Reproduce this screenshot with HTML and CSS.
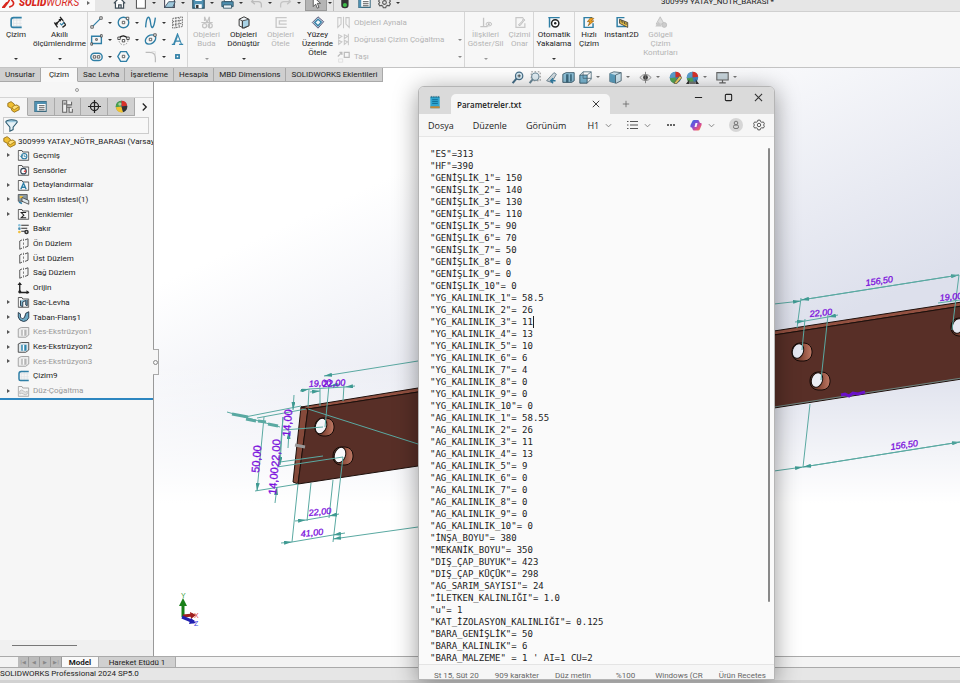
FILE: index.html
```html
<!DOCTYPE html>
<html lang="tr">
<head>
<meta charset="utf-8">
<title>SOLIDWORKS - Parametreler</title>
<link rel="stylesheet" href="styles.css">
</head>
<body>
<svg class="defs" aria-hidden="true">
  <defs>
    <linearGradient id="cyl" x1="0" x2="1"><stop offset="0" stop-color="#4d2a20"/><stop offset=".5" stop-color="#8a4b3a"/><stop offset="1" stop-color="#c07a66"/></linearGradient>
    <linearGradient id="copilotGrad" x1="0" y1="0" x2="1" y2="1"><stop offset="0" stop-color="#2b6fe0"/><stop offset=".4" stop-color="#7a4fd8"/><stop offset=".7" stop-color="#e0508a"/><stop offset="1" stop-color="#f09030"/></linearGradient>
    <marker id="arrow" viewBox="0 0 8 4" markerWidth="8" markerHeight="4" refX="8" refY="2" orient="auto-start-reverse" markerUnits="userSpaceOnUse"><path d="M0 0L8 2L0 4z" style="fill:#3f9a92;stroke:none"/></marker>
  </defs>
  <symbol id="i-sketch" viewBox="0 0 16 16"><path d="M5 1v14M9 1v14M13 4v10M4 5h11M4 9h11M4 12h11" stroke="#dfe3e6" fill="none"/><path d="M15 2H5Q2 2 2 5v7q0 2 2 2h11" fill="none" stroke="#2f7fa6" stroke-width="2"/></symbol>
  <symbol id="i-dim" viewBox="0 0 16 16"><path d="M2 11L10 3M1 8l4 6M8 1l4 5M12 7l3 4M11 14l4-3" stroke="#222" stroke-width="1.6" fill="none"/><path d="M2 11l1-4 3 3zM10 3L6 4l3 3z" fill="#222"/><path d="M8 9l2 2 3-3" stroke="#2f7fa6" fill="none" stroke-width="1.5"/></symbol>
  <symbol id="i-line" viewBox="0 0 16 16"><path d="M2 14L14 2" stroke="#2f7fa6" stroke-width="1.6"/><path d="M1 12h3v3H1zM12 1h3v3h-3z" fill="#fff" stroke="#444"/></symbol>
  <symbol id="i-circle" viewBox="0 0 16 16"><circle cx="8" cy="8" r="6.5" fill="none" stroke="#2f7fa6" stroke-width="1.7"/><path d="M6.500 6.500h3v3h-3zM11.500 1.500h3v3h-3z" fill="#fff" stroke="#444"/></symbol>
  <symbol id="i-spline" viewBox="0 0 16 16"><path d="M2 14C3-2 7-1 8 8s4 9 6-6" fill="none" stroke="#2f7fa6" stroke-width="1.7"/></symbol>
  <symbol id="i-mesh" viewBox="0 0 16 16"><path d="M2 3L14 1v12L2 15zM6 2v13M10 2v12M2 7l12-2M2 11l12-2" fill="none" stroke="#555" stroke-dasharray="2 1"/></symbol>
  <symbol id="i-rect" viewBox="0 0 16 16"><path d="M2 4h12v9H2z" fill="none" stroke="#2f7fa6" stroke-width="1.7"/><path d="M7 7h2v2H7zM13 2h2v3h-2zM1 12h2v3H1z" fill="#fff" stroke="#444"/></symbol>
  <symbol id="i-arc" viewBox="0 0 16 16"><circle cx="8" cy="9" r="5.500" fill="none" stroke="#888" stroke-dasharray="2 1.500"/><path d="M2 7q5-7 12 0" stroke="#222" stroke-width="1.600" fill="none"/><path d="M1 5h3v3H1zM12 5h3v3h-3zM6.500 8h3v3h-3z" fill="#fff" stroke="#333"/></symbol>
  <symbol id="i-ellipse" viewBox="0 0 16 16"><ellipse cx="8" cy="8" rx="7" ry="5" transform="rotate(-35 8 8)" fill="none" stroke="#2f7fa6" stroke-width="1.700"/><path d="M6.500 6.500h3v3h-3zM12 1h3v3h-3z" fill="#fff" stroke="#444"/></symbol>
  <symbol id="i-text" viewBox="0 0 16 16"><path d="M1 14h4M10 14h5M3 14L8 1l5 13M8 4L4 14M5 10h6" fill="none" stroke="#3787ad" stroke-width="1.300"/></symbol>
  <symbol id="i-slot" viewBox="0 0 16 16"><rect x="1" y="4" width="14" height="9" rx="4.500" fill="none" stroke="#2f7fa6" stroke-width="1.700"/><path d="M4 7h3v3H4zM9 7h3v3H9z" fill="#fff" stroke="#444"/></symbol>
  <symbol id="i-poly" viewBox="0 0 16 16"><path d="M4.500 2h7L15 8l-3.500 6h-7L1 8z" fill="none" stroke="#2f7fa6" stroke-width="1.700"/><path d="M6.500 6.500h3v3h-3z" fill="#fff" stroke="#444"/></symbol>
  <symbol id="i-fillet" viewBox="0 0 16 16"><path d="M2 3h5q7 0 7 7v5" fill="none" stroke="#bbb" stroke-width="1.500"/><path d="M9 2h5v5" fill="none" stroke="#ddd"/></symbol>
  <symbol id="i-point" viewBox="0 0 16 16"><path d="M5 5h6v6H5z" fill="#2f7fa6"/><path d="M7 7h2v2H7z" fill="#fff"/></symbol>
  <symbol id="i-trim" viewBox="0 0 16 16"><path d="M1 8h14M5 1l3 7 3-7M5 1v5M11 1v14" fill="none" stroke="#c4c4c4" stroke-width="1.500"/><circle cx="5" cy="12" r="2.500" fill="none" stroke="#c4c4c4" stroke-width="1.500"/><circle cx="12" cy="12" r="2.500" fill="none" stroke="#c4c4c4" stroke-width="1.500"/></symbol>
  <symbol id="i-cube" viewBox="0 0 16 16"><path d="M2 4l6-3 6 3v8l-6 3-6-3z" fill="#f0f5f8" stroke="#333" stroke-width="1.200"/><path d="M6 6l8-2v8l-8 3z" fill="#a9d3e6" stroke="#333"/><path d="M2 4l4 2v9" fill="none" stroke="#333"/></symbol>
  <symbol id="i-offset" viewBox="0 0 16 16"><path d="M15 2H2v12h13M15 6H6v4h9" fill="none" stroke="#c8c8c8" stroke-width="1.700"/></symbol>
  <symbol id="i-surf" viewBox="0 0 16 16"><path d="M1 8l7-7 7 6-7 8z" fill="#bcd" stroke="#446"/><path d="M4 8l4-4 4 3.500L8 12z" fill="#eef6fa" stroke="#2f7fa6" stroke-width="1.500"/></symbol>
  <symbol id="i-mirror" viewBox="0 0 16 16"><path d="M8 1v14M1 2v12l4-4V2zM15 2v12l-4-4V2z" fill="none" stroke="#c8c8c8" stroke-width="1.300"/></symbol>
  <symbol id="i-pattern" viewBox="0 0 16 16"><path d="M2 2l4 2-4 3zM9 2l4 2-4 3zM2 9l4 2-4 3zM9 9l4 2-4 3zM14 1v14" fill="none" stroke="#c8c8c8" stroke-width="1.300"/></symbol>
  <symbol id="i-move" viewBox="0 0 16 16"><path d="M1 8l5-5M3 3h3v3M9 3h6v6H9z" fill="none" stroke="#bcbcbc" stroke-width="1.500"/><path d="M2 11h5v4H2z" fill="none" stroke="#ddd"/></symbol>
  <symbol id="i-rel" viewBox="0 0 16 16"><path d="M5 2v11M1 13h9" stroke="#c4c4c4" stroke-width="1.600"/><ellipse cx="11.500" cy="10" rx="3.500" ry="2.300" fill="#eee" stroke="#bbb"/><circle cx="11.500" cy="10" r="1" fill="#aaa"/></symbol>
  <symbol id="i-repair" viewBox="0 0 16 16"><path d="M12 2H3v12h11V9" fill="none" stroke="#c8c8c8" stroke-width="1.500"/><path d="M6 11l5-5 1-3 2 2-2 2-4 5z" fill="#ddd" stroke="#bbb"/></symbol>
  <symbol id="i-snap" viewBox="0 0 16 16"><path d="M1 2h14M2.500 2v12" fill="none" stroke="#2f7fa6" stroke-width="1.800"/><circle cx="9.500" cy="9" r="4.500" fill="#fff" stroke="#222" stroke-width="1.800"/><circle cx="9.500" cy="9" r="1.500" fill="#222"/></symbol>
  <symbol id="i-fast" viewBox="0 0 16 16"><path d="M12 2H2v12h11V9" fill="none" stroke="#2f7fa6" stroke-width="1.800"/><path d="M10 2l4 1-3 3h3l-7 6 2-5H6z" fill="#f0a020" stroke="#7a4a00" stroke-width=".7"/></symbol>
  <symbol id="i-inst" viewBox="0 0 16 16"><path d="M11 2H2v11h11" fill="none" stroke="#2f7fa6" stroke-width="1.800"/><path d="M5 4l10 4v6L5 9z" fill="#f2c84b" stroke="#333"/><path d="M7 5v3M9 6v3M11 7v3M13 8v3" stroke="#333"/></symbol>
  <symbol id="i-shade" viewBox="0 0 16 16"><path d="M7 1l5 9H2z" fill="#ddd" stroke="#bbb"/><path d="M1 13l4-6 4 6z" fill="#c8c8c8"/><circle cx="12" cy="11" r="3" fill="#ccc" stroke="#bbb"/></symbol>
  <symbol id="i-home" viewBox="0 0 16 16"><path d="M1 9l7-7 7 7M3 8v7h10V8M7 15v-4h3v4" fill="#fff" stroke="#3d4b55" stroke-width="1.500"/></symbol>
  <symbol id="i-page" viewBox="0 0 16 16"><path d="M3 1h8l3 3v11H3z" fill="#fff" stroke="#555" stroke-width="1.300"/></symbol>
  <symbol id="i-open" viewBox="0 0 16 16"><path d="M2 3h12v11H2z" fill="#fff" stroke="#445" stroke-width="1.300"/><path d="M2 14L7 7h8l-3 7z" fill="#9fc8dc" stroke="#345"/></symbol>
  <symbol id="i-save" viewBox="0 0 16 16"><path d="M1 1h14v14H1z" fill="#4f90b1" stroke="#284d60" stroke-width="1.400"/><path d="M4 1h8v5H4zM4 10h8v5H4z" fill="#fff"/><path d="M5 11h3v4H5z" fill="#333"/></symbol>
  <symbol id="i-print" viewBox="0 0 16 16"><path d="M4 2h9v5H4z" fill="#fff" stroke="#345"/><path d="M1 7h14v6H1z" fill="#4f90b1" stroke="#284d60"/><path d="M3 11h10v4H3z" fill="#e8f2f6" stroke="#284d60"/></symbol>
  <symbol id="i-undo" viewBox="0 0 16 16"><path d="M5 3L2 7l4 3M2 7h8q4 0 4 4v3" fill="none" stroke="#bcbcbc" stroke-width="1.600"/></symbol>
  <symbol id="i-redo" viewBox="0 0 16 16"><path d="M11 3l3 4-4 3M14 7H6q-4 0-4 4v3" fill="none" stroke="#c4c4c4" stroke-width="1.600"/></symbol>
  <symbol id="i-cursor" viewBox="0 0 16 16"><path d="M4 1v12l3-3 2 5 2-1-2-5h4z" fill="#fff" stroke="#444"/></symbol>
  <symbol id="i-light" viewBox="0 0 16 16"><rect x="4" y="1" width="9" height="14" rx="4" fill="#333"/><circle cx="8.500" cy="11" r="2.500" fill="#3fbf4a"/></symbol>
  <symbol id="i-list" viewBox="0 0 16 16"><path d="M1 2h14v12H1z" fill="#fff" stroke="#3d6b80" stroke-width="1.300"/><path d="M1 2h14v3H1zM1 5h3v9H1z" fill="#4f90b1"/><path d="M6 7h7M6 9.500h7M6 12h7" stroke="#333"/></symbol>
  <symbol id="i-gear" viewBox="0 0 16 16"><path d="M6.500 1.500h3l.6 2 1.700.9 2-.5 1.500 2.500-1.400 1.600 1.400 1.600-1.500 2.500-2-.5-1.700.9-.6 2h-3l-.6-2-1.700-.9-2 .5L.7 9.600 2.100 8 .7 6.400l1.500-2.500 2 .5 1.700-.9z" fill="none" stroke="#555" stroke-width="1.300"/><circle cx="8" cy="8" r="2.300" fill="none" stroke="#555" stroke-width="1.300"/></symbol>
  <symbol id="i-part" viewBox="0 0 16 16"><path d="M1 4l4-2 4 3v2l3-1 3 2v4l-6 3-3-2-1-3-4-2z" fill="#f0bf32" stroke="#8a6510"/><path d="M9 7q-3 1-3 3l3 2 6-4" fill="#ffe07a" stroke="#9c7412"/></symbol>
  <symbol id="i-conf" viewBox="0 0 16 16"><path d="M2 1h5v14H2zM7 1v5h6V2M7 9h6M10 9v6h4v-4" fill="#eee" stroke="#666" stroke-width="1.300"/><path d="M3 3h3v3H3z" fill="#888"/></symbol>
  <symbol id="i-target" viewBox="0 0 16 16"><circle cx="8" cy="8" r="5" fill="none" stroke="#222" stroke-width="1.500"/><path d="M8 0v16M0 8h16" stroke="#222" stroke-width="1.500"/></symbol>
  <symbol id="i-ball" viewBox="0 0 16 16"><circle cx="8" cy="8" r="7" fill="#2f73b8"/><path d="M8 8V1A7 7 0 0 0 1 9z" fill="#4aa04a"/><path d="M8 8V1a7 7 0 0 1 7 6z" fill="#d8322a"/><path d="M8 8l-7 1a7 7 0 0 0 9 6z" fill="#f2c330"/><path d="M8 8l7-1a7 7 0 0 1-5 8z" fill="#333"/><circle cx="6" cy="5" r="2" fill="#fff" opacity=".5"/></symbol>
  <symbol id="i-globe" viewBox="0 0 16 16"><circle cx="8" cy="8" r="7" fill="#3f86c4"/><path d="M8 8V1A7 7 0 0 0 1 9z" fill="#5a9fd0"/><path d="M8 8V1a7 7 0 0 1 7 6z" fill="#d8322a"/><path d="M8 8l-7 1a7 7 0 0 0 9 6z" fill="#55a855"/></symbol>
  <symbol id="i-filter" viewBox="0 0 16 16"><ellipse cx="8" cy="3.500" rx="7" ry="2.500" fill="#9cc9de" stroke="#2c5a70" stroke-width="1.300"/><path d="M1 4l5 6v5l4-2v-3l5-6" fill="#e7f2f7" stroke="#2c5a70" stroke-width="1.300"/></symbol>
  <symbol id="i-folder" viewBox="0 0 16 16"><path d="M1 2h5l1 2h8v11H1z" fill="#f6f6f6" stroke="#555" stroke-width="1.300"/></symbol>
  <symbol id="i-hist" viewBox="0 0 16 16"><use href="#i-folder"/><circle cx="9" cy="9.500" r="3.500" fill="none" stroke="#2f7fa6" stroke-width="1.500"/><path d="M9 7.500v2.500h2M3 9l2.500 2L7 8" stroke="#2f7fa6" fill="none"/></symbol>
  <symbol id="i-sens" viewBox="0 0 16 16"><use href="#i-folder"/><circle cx="8" cy="9.500" r="3.700" fill="#fff" stroke="#345" stroke-width="1.500"/><path d="M8 9.500l3-2v4z" fill="#d33"/></symbol>
  <symbol id="i-anno" viewBox="0 0 16 16"><use href="#i-folder"/><path d="M4.500 13.500L8 5.500l3.500 8M6 11h4" fill="none" stroke="#2f7fa6" stroke-width="1.700"/></symbol>
  <symbol id="i-cut" viewBox="0 0 16 16"><path d="M1 2h12v9H1z" fill="#8a9aa5" stroke="#444"/><path d="M3 4h4v3H3z" fill="#f0c040"/><path d="M6 6l9 4v5l-9-4z" fill="#dfe9ee" stroke="#333"/><path d="M2 12l4 2" stroke="#2f7fa6" stroke-width="2"/></symbol>
  <symbol id="i-sum" viewBox="0 0 16 16"><use href="#i-folder"/><path d="M11.500 6H5l3.500 3.500L5 13h6.500" fill="none" stroke="#222" stroke-width="1.400"/></symbol>
  <symbol id="i-mat" viewBox="0 0 16 16"><path d="M5 3h10M5 7h8M5 11h6" stroke="#333" stroke-width="1.600"/><circle cx="2.500" cy="3" r="1.800" fill="#8cc4dc"/><circle cx="2.500" cy="7.500" r="1.800" fill="#4f90b1"/><circle cx="2.500" cy="12" r="1.800" fill="#f0c040"/><circle cx="12" cy="12" r="3" fill="#333"/><circle cx="12" cy="12" r="1" fill="#fff"/></symbol>
  <symbol id="i-plane" viewBox="0 0 16 16"><path d="M3 4v11l3-1.500M3 4l3-1.500M10 12.500l4-1.500V1l-4 1.500" fill="none" stroke="#555" stroke-width="1.300"/><path d="M8 1v15" stroke="#555" stroke-dasharray="3 2"/></symbol>
  <symbol id="i-orig" viewBox="0 0 16 16"><path d="M3 2v12h12" fill="none" stroke="#222" stroke-width="1.800"/><path d="M0 4l3-4 3 4zM12 11l4 3-4 2z" fill="#222"/><circle cx="3" cy="13" r="2" fill="#222"/></symbol>
  <symbol id="i-sheet" viewBox="0 0 16 16"><use href="#i-folder"/><path d="M4 6v7l3 1V8l4-2v6l2 1V5" fill="#7fb4cc" stroke="#234" stroke-width="1.200"/></symbol>
  <symbol id="i-flange" viewBox="0 0 16 16"><path d="M1 2l3 2v4q2 4 5 1l2-6 4-2v8q-2 5-7 5-6-1-7-6z" fill="#6ca9c4" stroke="#234" stroke-width="1.200"/><path d="M4 4v4q2 4 5 1l2-6" fill="#fff" stroke="#234"/></symbol>
  <symbol id="i-ext" viewBox="0 0 16 16"><path d="M1 4l4-2h10v10l-4 3H1z" fill="#dfe7eb" stroke="#444" stroke-width="1.200"/><path d="M5 5h7v8H5z" fill="#2f86ae"/><path d="M7 5h2v8H7z" fill="#fff"/></symbol>
  <symbol id="i-flat" viewBox="0 0 16 16"><use href="#i-folder"/><path d="M3 8q3-3 5 0t5 0v4q-3 2-5 0t-5 0z" fill="#ccc" stroke="#777"/></symbol>
  <symbol id="i-zoomfit" viewBox="0 0 16 16"><circle cx="10" cy="6" r="4.500" fill="#d9ecf5" stroke="#47708a" stroke-width="1.500"/><path d="M7 9l-5 6" stroke="#47708a" stroke-width="2.500"/><path d="M10 4v4M8 6h4" stroke="#333"/></symbol>
  <symbol id="i-zoomarea" viewBox="0 0 16 16"><path d="M4 1h11v11H4z" fill="none" stroke="#777" stroke-dasharray="2 2"/><circle cx="9" cy="7" r="4.500" fill="#e4f0f6" stroke="#6c8a9a" stroke-width="1.300"/><path d="M6 10l-4 5" stroke="#6c8a9a" stroke-width="2.500"/></symbol>
  <symbol id="i-prev" viewBox="0 0 16 16"><path d="M2 12L11 2l3 2-6 10z" fill="#d3dde2" stroke="#5d7888"/><path d="M13 12H7m3-3l-3 3 3 3" stroke="#2f7fa6" stroke-width="1.600" fill="none"/></symbol>
  <symbol id="i-section" viewBox="0 0 16 16"><path d="M1 4l4-2h10v10l-3 2H1z" fill="#8fc2da" stroke="#2d4f60"/><path d="M5 4h3v10H5zM10 4h2v9h-2z" fill="#3d6b80"/></symbol>
  <symbol id="i-view" viewBox="0 0 16 16"><path d="M1 5h9v10H1z" fill="#7db9d4" stroke="#2d4f60"/><path d="M1 5l4-4h10v9l-5 5M10 5l5-4M5 1v8h10" fill="none" stroke="#4c6c7c"/></symbol>
  <symbol id="i-style" viewBox="0 0 16 16"><path d="M1 3l5-2 9 1v10l-6 3-8-2z" fill="#cfe6f1" stroke="#46606e"/><path d="M1 3l7 2v10l-7-2z" fill="#5ca0c0"/><path d="M8 5l7-3M8 5v10" fill="none" stroke="#46606e"/></symbol>
  <symbol id="i-eye" viewBox="0 0 16 16"><path d="M1 8q7-8 14 0-7 8-14 0z" fill="#eee" stroke="#888"/><circle cx="8" cy="8" r="3" fill="#444"/><path d="M8 1v14" stroke="#777"/></symbol>
  <symbol id="i-appear" viewBox="0 0 16 16"><use href="#i-globe"/><path d="M6 15l7-9 3 2-7 8z" fill="#f0cf62" stroke="#665"/></symbol>
  <symbol id="i-scene" viewBox="0 0 16 16"><use href="#i-globe"/><path d="M0 16l4-6v6zM16 16l-4-6v6z" fill="#333"/><path d="M4 13h8v3H4z" fill="#777"/></symbol>
  <symbol id="i-screen" viewBox="0 0 16 16"><path d="M1 2h14v9H1z" fill="#c9d6dd" stroke="#666" stroke-width="1.300"/><path d="M8 11v3M4 14.500h8" stroke="#666" stroke-width="1.500"/></symbol>
  <symbol id="i-chev" viewBox="0 0 8 8"><path d="M1 2.500l3 3 3-3" fill="none" stroke="#777"/></symbol>
  <symbol id="i-x" viewBox="0 0 10 10"><path d="M1 1l8 8M9 1L1 9" stroke="#333" stroke-width="1.200"/></symbol>
</svg>

<div class="app">
  <header class="titlebar">
    <div class="brand"><svg class="ds" viewBox="0 0 20 16" aria-hidden="true"><path d="M3 2h4q4 1 1 5L3 14H1L6 8M18 2h-4q-4 1-1 4t0 6l-4 2" fill="none" stroke="#d8261c" stroke-width="2"/></svg><b>SOLID</b><i>WORKS</i><span class="caret side"></span></div>
    <nav class="quick" aria-label="Hızlı erişim">
      <button class="q home" aria-label="Ana sayfa"><svg><use href="#i-home"/></svg></button>
      <button class="q" aria-label="Yeni"><svg><use href="#i-page"/></svg><span class="caret"></span></button>
      <button class="q" aria-label="Aç"><svg><use href="#i-open"/></svg><span class="caret"></span></button>
      <button class="q" aria-label="Kaydet"><svg><use href="#i-save"/></svg><span class="caret"></span></button>
      <button class="q" aria-label="Yazdır"><svg><use href="#i-print"/></svg><span class="caret"></span></button>
      <button class="q" aria-label="Geri al"><svg><use href="#i-undo"/></svg><span class="caret"></span></button>
      <button class="q narrow" aria-label="Yinele"><svg><use href="#i-redo"/></svg><span class="caret"></span></button>
      <button class="q active" aria-label="Seç"><svg><use href="#i-cursor"/></svg></button>
      <button class="q drop" aria-label="Seçim seçenekleri"><span class="caret"></span></button>
      <button class="q tight" aria-label="Yeniden oluştur"><svg><use href="#i-light"/></svg></button>
      <button class="q tight" aria-label="Dosya özellikleri"><svg><use href="#i-list"/></svg></button>
      <button class="q" aria-label="Seçenekler"><svg><use href="#i-gear"/></svg><span class="caret"></span></button>
    </nav>
    <div class="doc">300999 YATAY_NÖTR_BARASI *</div>
  </header>

  <section class="ribbon" aria-label="Komut yöneticisi">
    <button class="cmd w-s"><svg><use href="#i-sketch"/></svg><span>Çizim</span><i class="caret low"></i></button>
    <button class="cmd w-l"><svg><use href="#i-dim"/></svg><span>Akıllı ölçümlendirme</span><i class="caret low"></i></button>
    <div class="tools">
      <button aria-label="Çizgi"><svg><use href="#i-line"/></svg><i class="caret"></i></button>
      <button aria-label="Daire"><svg><use href="#i-circle"/></svg><i class="caret"></i></button>
      <button aria-label="Spline"><svg><use href="#i-spline"/></svg><i class="caret"></i></button>
      <button aria-label="Düzlem"><svg><use href="#i-mesh"/></svg></button>
      <button aria-label="Dikdörtgen"><svg><use href="#i-rect"/></svg><i class="caret"></i></button>
      <button aria-label="Yay"><svg><use href="#i-arc"/></svg><i class="caret"></i></button>
      <button aria-label="Elips"><svg><use href="#i-ellipse"/></svg><i class="caret"></i></button>
      <button aria-label="Metin"><svg><use href="#i-text"/></svg></button>
      <button aria-label="Yuva"><svg><use href="#i-slot"/></svg><i class="caret"></i></button>
      <button aria-label="Çokgen"><svg><use href="#i-poly"/></svg></button>
      <button aria-label="Radyus"><svg><use href="#i-fillet"/></svg><i class="caret"></i></button>
      <button aria-label="Nokta"><svg><use href="#i-point"/></svg></button>
    </div>
    <button class="cmd w-m off"><svg><use href="#i-trim"/></svg><span>Objeleri Buda</span><i class="caret low"></i></button>
    <button class="cmd w-m"><svg><use href="#i-cube"/></svg><span>Objeleri Dönüştür</span><i class="caret low"></i></button>
    <button class="cmd w-m off"><svg><use href="#i-offset"/></svg><span>Objeleri Ötele</span></button>
    <button class="cmd w-m"><svg><use href="#i-surf"/></svg><span>Yüzey Üzerinde Ötele</span></button>
    <div class="stack">
      <button><svg><use href="#i-mirror"/></svg><span>Objeleri Aynala</span></button>
      <button><svg><use href="#i-pattern"/></svg><span>Doğrusal Çizim Çoğaltma</span><i class="caret"></i></button>
      <button><svg><use href="#i-move"/></svg><span>Taşı</span><i class="caret"></i></button>
    </div>
    <button class="cmd w-x off"><svg><use href="#i-rel"/></svg><span>İlişkileri Göster/Sil</span><i class="caret low"></i></button>
    <button class="cmd w-n off edge"><svg><use href="#i-repair"/></svg><span>Çizimi Onar</span></button>
    <button class="cmd w-x edge"><svg><use href="#i-snap"/></svg><span>Otomatik Yakalama</span><i class="caret low"></i></button>
    <button class="cmd w-n"><svg><use href="#i-fast"/></svg><span>Hızlı Çizim</span></button>
    <button class="cmd w-m"><svg><use href="#i-inst"/></svg><span>Instant2D</span></button>
    <button class="cmd w-x off"><svg><use href="#i-shade"/></svg><span>Gölgeli Çizim Konturları</span></button>
  </section>

  <div class="work">
    <div class="tabrow">
      <nav class="tabs" aria-label="Sekmeler">
        <button>Unsurlar</button><button class="on">Çizim</button><button>Sac Levha</button><button>İşaretleme</button><button>Hesapla</button><button>MBD Dimensions</button><button>SOLIDWORKS Eklentileri</button>
      </nav>
      <div class="heads" role="toolbar" aria-label="Görünüm">
        <button aria-label="Sığdır"><svg><use href="#i-zoomfit"/></svg></button>
        <button aria-label="Alanı yakınlaştır"><svg><use href="#i-zoomarea"/></svg></button>
        <button aria-label="Önceki görünüm"><svg><use href="#i-prev"/></svg></button>
        <button aria-label="Kesit"><svg><use href="#i-section"/></svg></button>
        <button aria-label="Yönlendirme"><svg><use href="#i-view"/></svg><i class="caret"></i></button>
        <button aria-label="Görüntü stili"><svg><use href="#i-style"/></svg><i class="caret"></i></button>
        <button aria-label="Gizle/Göster"><svg><use href="#i-eye"/></svg><i class="caret"></i></button>
        <button aria-label="Görünüm düzenle"><svg><use href="#i-appear"/></svg></button>
        <button aria-label="Sahne"><svg><use href="#i-scene"/></svg><i class="caret"></i></button>
        <button aria-label="Ekran"><svg><use href="#i-screen"/></svg><i class="caret"></i></button>
      </div>
    </div>
    <div class="main">
      <aside class="panel">
        <div class="grip"><span></span></div>
        <div class="ptabs">
          <button class="on" aria-label="Unsur ağacı"><svg><use href="#i-part"/></svg></button><button aria-label="Özellikler"><svg><use href="#i-list"/></svg></button><button aria-label="Konfigürasyon"><svg><use href="#i-conf"/></svg></button><button aria-label="DimXpert"><svg><use href="#i-target"/></svg></button><button aria-label="Görünümler"><svg><use href="#i-ball"/></svg></button><button class="more" aria-label="Daha fazla"><svg viewBox="0 0 8 8"><path d="M2 0l4 4-4 4" fill="none" stroke="#222" stroke-width="1.500"/></svg></button>
        </div>
        <label class="filter"><svg><use href="#i-filter"/></svg><input type="text" aria-label="Filtre"></label>
        <div class="root"><svg><use href="#i-part"/></svg><span>300999 YATAY_NÖTR_BARASI (Varsayı</span></div>
        <ul class="tree">
          <li class="has"><svg><use href="#i-hist"/></svg>Geçmiş</li>
          <li><svg><use href="#i-sens"/></svg>Sensörler</li>
          <li class="has"><svg><use href="#i-anno"/></svg>Detaylandırmalar</li>
          <li class="has"><svg><use href="#i-cut"/></svg>Kesim listesi(1)</li>
          <li class="has"><svg><use href="#i-sum"/></svg>Denklemler</li>
          <li><svg><use href="#i-mat"/></svg>Bakır</li>
          <li><svg><use href="#i-plane"/></svg>Ön Düzlem</li>
          <li><svg><use href="#i-plane"/></svg>Üst Düzlem</li>
          <li><svg><use href="#i-plane"/></svg>Sağ Düzlem</li>
          <li><svg><use href="#i-orig"/></svg>Orijin</li>
          <li class="has"><svg><use href="#i-sheet"/></svg>Sac-Levha</li>
          <li class="has"><svg><use href="#i-flange"/></svg>Taban-Flanş1</li>
          <li class="has off"><svg><use href="#i-ext"/></svg>Kes-Ekstrüzyon1</li>
          <li class="has"><svg><use href="#i-ext"/></svg>Kes-Ekstrüzyon2</li>
          <li class="has off"><svg><use href="#i-ext"/></svg>Kes-Ekstrüzyon3</li>
          <li><svg><use href="#i-sketch"/></svg>Çizim9</li>
          <li class="has off"><svg><use href="#i-flat"/></svg>Düz-Çoğaltma</li>
        </ul>
        <div class="hscroll"><span></span></div>
        <button class="handle" aria-label="Paneli gizle"></button>
      </aside>
      <div class="view">
        <svg class="scene" viewBox="154 82 806 574" preserveAspectRatio="xMinYMin slice" role="img" aria-label="Bara modeli">
          <g stroke="#1d100c" stroke-width="1">
            <path d="M301 407L418 388 774 331 962 302V306L774 335 418 392 308 409z" fill="#935141"/>
            <path d="M301 407l7 2-10 75-5-2z" fill="#84493a"/>
            <path d="M308 409L418 392 774 335 962 306V379L774 408 418 466 298 484z" fill="#582f27"/>
          </g>
          <path d="M774 407L962 378" stroke="#6d8580"/>
          <g stroke="#160b08">
            <g><rect x="315" y="418" width="19" height="18" rx="8" fill="url(#cyl)"/><ellipse cx="321" cy="426" rx="5.500" ry="8" transform="rotate(20 321 426)" fill="#f4f5f9"/></g>
            <g><rect x="333" y="447" width="20" height="18" rx="8" fill="url(#cyl)"/><ellipse cx="340" cy="455" rx="5.500" ry="8" transform="rotate(20 340 455)" fill="#fafafc"/></g>
            <g><rect x="792" y="343" width="20" height="18" rx="8" fill="url(#cyl)"/><ellipse cx="798" cy="351" rx="5.500" ry="7.500" transform="rotate(20 798 351)" fill="#e6e8f1"/></g>
            <g><rect x="810" y="372" width="20" height="18" rx="8" fill="url(#cyl)"/><ellipse cx="817" cy="380" rx="5.500" ry="7.500" transform="rotate(20 817 380)" fill="#eceef4"/></g>
            <g><rect x="951" y="318" width="20" height="18" rx="8" fill="url(#cyl)"/><ellipse cx="958" cy="326" rx="5.500" ry="7.500" transform="rotate(20 958 326)" fill="#e6e8f1"/></g>
          </g>
          <g class="dims">
            <path d="M309 389l-1 18M320 388v18M329 385l-4 42M344 385l-1 16M308 409L418 444M245 417L301 406M257 418L306 409M255 491L298 484M283 430L323 427M277 467L343 457M280 462L323 456M283 417L279 465M298 484L292 542M311 483L307 521M333 480L329 518M343 457L333 542"/>
            <path d="M309 389L345 387M306 520L329 516M292 542L333 535M805 321L828 317M938 303L960 300M801 298L797 328M805 319L802 350M828 315L821 380M959 275L952 330M810 404L803 467"/>
            <path class="thick" d="M232 414l16 3M246 419l10 2M258 421l8 1M268 424l10 2"/>
            <path d="M227 412L280 427"/>
          </g>
          <g class="dims" marker-end="url(#arrow)">
            <path d="M300 391L309 389"/><path d="M355 386L345 387"/><path d="M310 392L320 391"/><path d="M340 384L330 386"/>
            <path d="M264 417L257 491"/><path d="M294 395L293 410"/><path d="M288 448L289 431"/><path d="M275 503L277 487"/>
            <path d="M295 521L306 520"/><path d="M339 514L329 516"/><path d="M281 543L292 542"/><path d="M345 533L333 535"/>
            <path d="M418 361L324 376"/><path d="M418 527L333 539"/><path d="M774 304L801 301"/><path d="M774 471L803 467"/>
            <path d="M795 322L805 321"/><path d="M838 315L828 317"/><path d="M283 417L280 465"/>
            <path d="M801 300L959 275"/><path d="M959 275L801 300"/><path d="M803 467L960 442"/><path d="M960 442L803 467"/>
          </g>
          <path d="M295 445l10 2" stroke="#999" stroke-width="3"/>
          <path d="M841 395l4-1 4 2 4-3 5 1 7-2" fill="none" stroke="#6a10c8" stroke-width="3"/>
          <g class="nums">
            <text transform="translate(309 387) rotate(-4)">19,00</text>
            <text transform="translate(323 387) rotate(-4)">22,00</text>
            <text transform="translate(309 516) rotate(-6)">22,00</text>
            <text transform="translate(301 537) rotate(-6)">41,00</text>
            <text transform="translate(866 286) rotate(-8)">156,50</text>
            <text transform="translate(810 317) rotate(-6)">22,00</text>
            <text transform="translate(940 301) rotate(-6)">19,00</text>
            <text transform="translate(891 450) rotate(-8)">156,50</text>
          </g>
          <g class="nums vert">
            <text transform="translate(290 437) rotate(-85)">14,00</text>
            <text transform="translate(259 473) rotate(-85)">50,00</text>
            <text transform="translate(279 467) rotate(-87)">22,00</text>
            <text transform="translate(276 495) rotate(-85)">14,00</text>
          </g>
          <g class="triad">
            <path d="M183 617v-12" stroke="#188018" stroke-width="3"/><path d="M179 606l4-8 4 8z" fill="#188018"/>
            <path d="M183 616l10-1" stroke="#a02020" stroke-width="3"/><path d="M190 612l6 3-5 4z" fill="#a02020"/>
            <path d="M182 617l12 5" stroke="#2020b0" stroke-width="3"/><path d="M191 618l5 5-7 1z" fill="#2020b0"/>
            <text x="181" y="598" fill="#3aa03a">Y</text><text x="194" y="618" fill="#e04040">X</text><text x="194" y="626" fill="#4040e0">Z</text>
          </g>
        </svg>
      </div>
    </div>
  </div>

  <nav class="sheets" aria-label="Model sekmeleri">
    <div class="navs"><button aria-label="İlk">|◀</button><button aria-label="Önceki">◀</button><button aria-label="Sonraki">▶</button><button aria-label="Son">▶|</button></div>
    <button class="sheet on">Model</button><button class="sheet">Hareket Etüdü 1</button>
  </nav>
  <footer class="status">SOLIDWORKS Professional 2024 SP5.0</footer>
</div>

<section class="notepad" aria-label="Not Defteri">
  <header class="nhead">
    <svg class="nicon" viewBox="0 0 12 16" aria-hidden="true"><path d="M1 2h10v12H1z" fill="#2fa5cf"/><path d="M1 12h10v2H1z" fill="#c0873a"/><path d="M2 1v2M4 1v2M6 1v2M8 1v2M10 1v2" stroke="#17607c"/><path d="M3 5h6M3 7h6M3 9h6" stroke="#0f6c93"/></svg>
    <div class="ntab"><span>Parametreler.txt</span><button aria-label="Sekmeyi kapat"><svg class="sx"><use href="#i-x"/></svg></button></div>
    <button class="plus" aria-label="Yeni sekme"><svg class="sx" viewBox="0 0 10 10"><path d="M5 1v8M1 5h8" stroke="#666"/></svg></button>
    <div class="wctl">
      <button aria-label="Simge durumuna küçült"><svg viewBox="0 0 10 10"><path d="M1 5h8" stroke="#222" stroke-width="1.200"/></svg></button>
      <button aria-label="Ekranı kapla"><svg viewBox="0 0 10 10"><rect x="1.500" y="1.500" width="7" height="7" rx="1" fill="none" stroke="#222" stroke-width="1.200"/></svg></button>
      <button aria-label="Kapat"><svg><use href="#i-x"/></svg></button>
    </div>
  </header>
  <div class="nbar">
    <div class="nmenu"><button>Dosya</button><button>Düzenle</button><button>Görünüm</button></div>
    <div class="nformat">
      <button>H1<svg class="ch"><use href="#i-chev"/></svg></button>
      <button aria-label="Liste"><svg class="g" viewBox="0 0 12 12"><path d="M4 2.500h8M4 6h8M4 9.500h8M1 2.500h1.500M1 6h1.500M1 9.500h1.500" stroke="#555"/></svg><svg class="ch"><use href="#i-chev"/></svg></button>
      <button aria-label="Diğer"><svg class="g" viewBox="0 0 12 12"><path d="M2 6h2M5 6h2M8 6h2" stroke="#333" stroke-width="1.500"/></svg></button>
    </div>
    <div class="nright">
      <button aria-label="Copilot"><svg class="g" viewBox="0 0 12 12"><path d="M4 1h4q1 0 1.500 2L10 4h1q1 0 .6 2L10 10q-.5 1.500-2 1.500H4q-1 0-1.500-1.500L2 8.500H1Q0 8 .5 6L2 3q.5-2 2-2z" fill="url(#copilotGrad)"/><path d="M5.500 4h2L6.500 8h-2z" fill="#f7f7f7"/></svg><svg class="ch"><use href="#i-chev"/></svg></button>
      <button class="user" aria-label="Hesap"><svg class="g" viewBox="0 0 12 12"><circle cx="6" cy="4" r="1.800" fill="none" stroke="#777"/><rect x="3.500" y="6" width="5" height="3.500" rx="1.500" fill="none" stroke="#777"/></svg></button>
      <button aria-label="Ayarlar"><svg class="g"><use href="#i-gear"/></svg></button>
    </div>
  </div>
  <div class="nbody">
    <textarea aria-label="Metin düzenleyici" spellcheck="false" rows="43">"ES"=313
"HF"=390
"GENİŞLİK_1"= 150
"GENİŞLİK_2"= 140
"GENİŞLİK_3"= 130
"GENİŞLİK_4"= 110
"GENİŞLİK_5"= 90
"GENİŞLİK_6"= 70
"GENİŞLİK_7"= 50
"GENİŞLİK_8"= 0
"GENİŞLİK_9"= 0
"GENİŞLİK_10"= 0
"YG_KALINLIK_1"= 58.5
"YG_KALINLIK_2"= 26
"YG_KALINLIK_3"= 11
"YG_KALINLIK_4"= 13
"YG_KALINLIK_5"= 10
"YG_KALINLIK_6"= 6
"YG_KALINLIK_7"= 4
"YG_KALINLIK_8"= 0
"YG_KALINLIK_9"= 0
"YG_KALINLIK_10"= 0
"AG_KALINLIK_1"= 58.55
"AG_KALINLIK_2"= 26
"AG_KALINLIK_3"= 11
"AG_KALINLIK_4"= 13
"AG_KALINLIK_5"= 9
"AG_KALINLIK_6"= 0
"AG_KALINLIK_7"= 0
"AG_KALINLIK_8"= 0
"AG_KALINLIK_9"= 0
"AG_KALINLIK_10"= 0
"İNŞA_BOYU"= 380
"MEKANİK_BOYU"= 350
"DIŞ_ÇAP_BUYUK"= 423
"DIŞ_ÇAP_KÜÇÜK"= 298
"AG_SARIM_SAYISI"= 24
"İLETKEN_KALINLIĞI"= 1.0
"u"= 1
"KAT_İZOLASYON_KALINLIĞI"= 0.125
"BARA_GENİŞLİK"= 50
"BARA_KALINLIK"= 6
"BARA_MALZEME" = 1 ' AI=1 CU=2</textarea>
    <span class="beam"></span>
    <span class="vscroll"></span>
  </div>
  <footer class="nstat"><span>St 15, Süt 20</span><span>909 karakter</span><span class="grow">Düz metin</span><span>%100</span><span class="wide">Windows (CR</span><span>Ürün Recetes</span></footer>
</section>
</body>
</html>
```
FILE: styles.css
```css
* { box-sizing: border-box; }
html, body { height: 100%; }
body {
  margin: 0;
  overflow: hidden;
  position: relative;
  font: 8px/9px Roboto, "Open Sans", sans-serif;
  color: #1c1c1c;
  background: #e9e9e9;
}
button {
  margin: 0; padding: 0; border: 0; background: none;
  font: inherit; color: inherit;
  display: flex; align-items: center; justify-content: center;
}
svg { width: 13px; height: 13px; flex: none; display: block; }
.defs { position: absolute; width: 0; height: 0; }
.caret {
  width: 0; height: 0; flex: none;
  border: 2px solid transparent; border-top-color: #333; border-bottom: 0;
}
.caret.side { border: 2px solid transparent; border-left: 3px solid #666; border-right: 0; }

.app { height: 100%; display: flex; flex-direction: column; }

/* title bar */
.titlebar { display: flex; height: 18px; margin-top: -6px; background: #e6e6e6; border-bottom: 1px solid #d0d0d0; flex: none; }
.brand { width: 95px; background: #fafafa; color: #d8261c; font-size: 10px; line-height: 17px; display: flex; align-items: center; padding-left: 2px; }
.brand .ds { width: 16px; margin-right: 1px; }
.brand b { font-weight: 900; font-style: italic; }
.brand .caret { margin-left: auto; margin-right: 5px; }
.quick { display: flex; padding-left: 18px; }
.q { width: 29px; justify-content: flex-start; gap: 5px; }
.q.home { width: 21px; }
.q.narrow { width: 26px; }
.q.active { width: 22px; background: #b4b4b4; justify-content: center; border: 1px solid #999; }
.q.drop { width: 7px; justify-content: center; border-right: 1px solid #bbb; }
.q.tight { width: 20px; justify-content: center; }
.quick .q:last-child { padding-left: 4px; }
.doc { margin: 0 auto; padding-left: 72px; line-height: 16px; }

/* ribbon */
.ribbon { display: flex; height: 56px; background: #f7f7f7; border-bottom: 1px solid #c4c4c4; flex: none; }
.cmd { flex-direction: column; justify-content: flex-start; padding-top: 4px; position: relative; }
.cmd svg { margin-bottom: 1px; width: 14px; }
.low { position: absolute; bottom: 7px; }
.w-s { width: 32px; } .w-m { width: 37px; } .w-l { width: 55px; } .w-x { width: 41px; } .w-n { width: 28px; }
.edge { border-right: 1px solid #d6d6d6; }
.off { color: #b4b4b4; }
.off .caret { border-top-color: #999; }
.tools { display: grid; grid-template-columns: repeat(3, 27px) 16px; grid-auto-rows: 17px; padding: 2px 0 0 2px; border: solid #d6d6d6; border-width: 0 1px; }
.tools button { justify-content: flex-start; gap: 5px; }
.stack { width: 130px; display: grid; grid-auto-rows: 17px; padding-top: 2px; margin-left: -1px; color: #b4b4b4; border-right: 1px solid #d6d6d6; }
.stack button { justify-content: flex-start; gap: 4px; padding: 0 2px; }
.stack .caret { margin-left: auto; border-top-color: #888; }

/* workspace */
.work {
  flex: 1; min-height: 0; display: flex; flex-direction: column;
  background: linear-gradient(to bottom, transparent 50%, #fff 74%), linear-gradient(155deg, #fff 28%, #dde0ec 62%);
}
.tabrow { display: flex; height: 14px; flex: none; }
.tabs { display: flex; }
.tabs button { padding: 0 5px; background: #cfcfcf; border: 1px solid #a9a9a9; border-width: 0 1px 1px 0; }
.tabs .on { background: #f8f8f8; padding: 0 8px; border-color: transparent #a9a9a9 transparent transparent; }
.heads { flex: 1; display: flex; align-items: center; justify-content: center; gap: 4px; padding: 4px 90px 0 0; }
.heads button { gap: 4px; }
.heads .caret { border-top-color: #777; margin-right: 5px; }
.main { flex: 1; min-height: 0; display: flex; }
.panel { width: 154px; flex: none; display: flex; flex-direction: column; background: #f6f6f6; border-right: 1px solid #999; position: relative; }
.grip { height: 16px; display: flex; align-items: center; justify-content: center; border-bottom: 1px solid #d4d4d4; flex: none; }
.grip span { width: 4px; height: 4px; border: 1px solid #999; border-radius: 50%; }
.ptabs { display: flex; height: 18px; padding-left: 1px; flex: none; }
.ptabs button { width: 27px; background: #d0d0d0; border: solid #aaa; border-width: 0 1px 1px 0; }
.ptabs .on { background: #f6f6f6; border-bottom-color: transparent; }
.ptabs .more { width: 18px; background: none; border: 0; }
.ptabs .more svg { width: 7px; height: 8px; }
.filter { display: flex; align-items: center; height: 17px; margin: 1px 4px 0 3px; border: 1px solid #ccc; background: #f8f8f8; padding-left: 1px; flex: none; }
.filter input { flex: 1; min-width: 0; border: 0; background: none; font: inherit; outline: 0; }
.root { display: flex; align-items: center; gap: 2px; height: 14px; padding-left: 3px; white-space: nowrap; overflow: hidden; flex: none; }
.tree { list-style: none; margin: 0; padding: 0; height: 252px; display: grid; grid-auto-rows: 1fr; border-bottom: 2px solid #2d86c0; flex: none; }
.tree li { display: flex; align-items: center; gap: 3px; padding-left: 17px; position: relative; }
.tree li svg { width: 13px; height: 12px; }
.tree .has::before { content: ""; position: absolute; left: 7px; border: 2px solid transparent; border-left: 3px solid #555; border-right: 0; }
.tree .off { color: #999; }
.tree .off svg { filter: grayscale(1); opacity: .5; }
.hscroll { margin-top: auto; height: 16px; padding: 5px 12px; background: #f0f0f0; }
.hscroll span { display: block; width: 65px; height: 1px; background: #777; }
.handle { position: absolute; right: -6px; top: 267px; width: 6px; height: 26px; background: #f6f6f6; border: 1px solid #aaa; border-left: 0; }
.handle::after { content: ""; width: 3px; height: 3px; border: 1px solid #888; border-radius: 50%; }
.view { flex: 1; min-width: 0; overflow: hidden; }
.scene { width: 100%; height: 100%; }
.dims path { fill: none; stroke: #5aa9a2; stroke-width: 1; }
.dims .thick { stroke-width: 3; }
.nums { fill: #7a10dc; font: italic 9px "Liberation Sans", sans-serif; stroke: #7a10dc; stroke-width: .3px; }
.nums.vert { font: 11px "Liberation Sans", sans-serif; }
.triad text { font: 7px "Liberation Sans", sans-serif; }

/* bottom rows */
.sheets { display: flex; height: 12px; background: #f3f3f3; border: solid #aaa; border-width: 1px 0; flex: none; }
.navs { display: flex; margin-left: 18px; background: #bbb; color: #888; font-size: 5px; }
.navs button { width: 11px; border-right: 1px solid #999; }
.sheet { width: 77px; background: #d0d0d0; border-right: 1px solid #aaa; }
.sheet.on { width: 37px; background: #fafafa; font-weight: 700; }
.status { height: 15px; line-height: 12px; background: #e6e6e6; border-bottom: 3px solid #d2d2d2; flex: none; }

/* floating editor window */
.notepad {
  position: absolute; left: 418px; top: 86px; bottom: 3px; width: 357px;
  display: flex; flex-direction: column; overflow: hidden;
  font-family: "Open Sans", "Noto Sans", sans-serif;
  background: #fafafa; border: 1px solid #b5b5b5; border-radius: 6px 6px 0 0;
  box-shadow: 0 4px 24px rgba(0, 0, 0, .4);
}
.nhead { display: flex; height: 27px; background: #dadada; flex: none; }
.nicon { width: 12px; height: 15px; margin: 8px 10px 0; }
.ntab { display: flex; align-items: center; justify-content: space-between; width: 159px; margin-top: 7px; padding: 0 10px 0 6px; background: #f6f6f6; border-radius: 5px 5px 0 0; font-weight: 600; }
.sx { width: 8px; height: 8px; }
.plus { padding: 7px 12px 0; }
.wctl { display: flex; margin: 0 9px 6px auto; gap: 17px; }
.wctl button { width: 13px; }
.wctl svg { width: 9px; height: 9px; }
.nbar { display: flex; align-items: center; height: 23px; padding: 0 9px; background: #f6f6f6; border-bottom: 1px solid #e6e6e6; font-size: 9px; flex: none; }
.nmenu, .nformat, .nright { display: flex; align-items: center; }
.nmenu { gap: 19px; }
.nformat { gap: 14px; margin-left: 21px; }
.nformat button, .nright button { gap: 6px; }
.nright { gap: 14px; margin-left: auto; }
.nright .user + button { margin-left: -4px; }
.nbar .g { width: 12px; height: 12px; }
.nbar .ch { width: 7px; height: 7px; }
.user { width: 14px; height: 14px; border-radius: 50%; background: #d6d6d6; }
.nbody { flex: 1; min-height: 0; position: relative; padding: 11px 0 0 11px; overflow: hidden; }
.nbody textarea {
  display: block; width: 100%; margin: 0; padding: 0; border: 0; outline: 0; resize: none; overflow: hidden;
  background: none; color: #222; font: 9px/12px "DejaVu Sans Mono", monospace;
}
.beam { position: absolute; left: 114px; top: 179px; width: 1px; height: 12px; background: #222; }
.vscroll { position: absolute; right: 4px; top: 11px; bottom: 62px; width: 2px; background: #888; border-radius: 1px; }
.nstat { display: flex; height: 15px; border-top: 1px solid #e4e4e4; background: #f6f6f6; color: #666; font-family: Roboto, sans-serif; padding-left: 7px; line-height: 22px; white-space: nowrap; flex: none; overflow: hidden; }
.nstat span { padding: 0 8px; }
.nstat .grow { flex: 1; }
.nstat .wide { padding: 0 8px 0 12px; }
```
